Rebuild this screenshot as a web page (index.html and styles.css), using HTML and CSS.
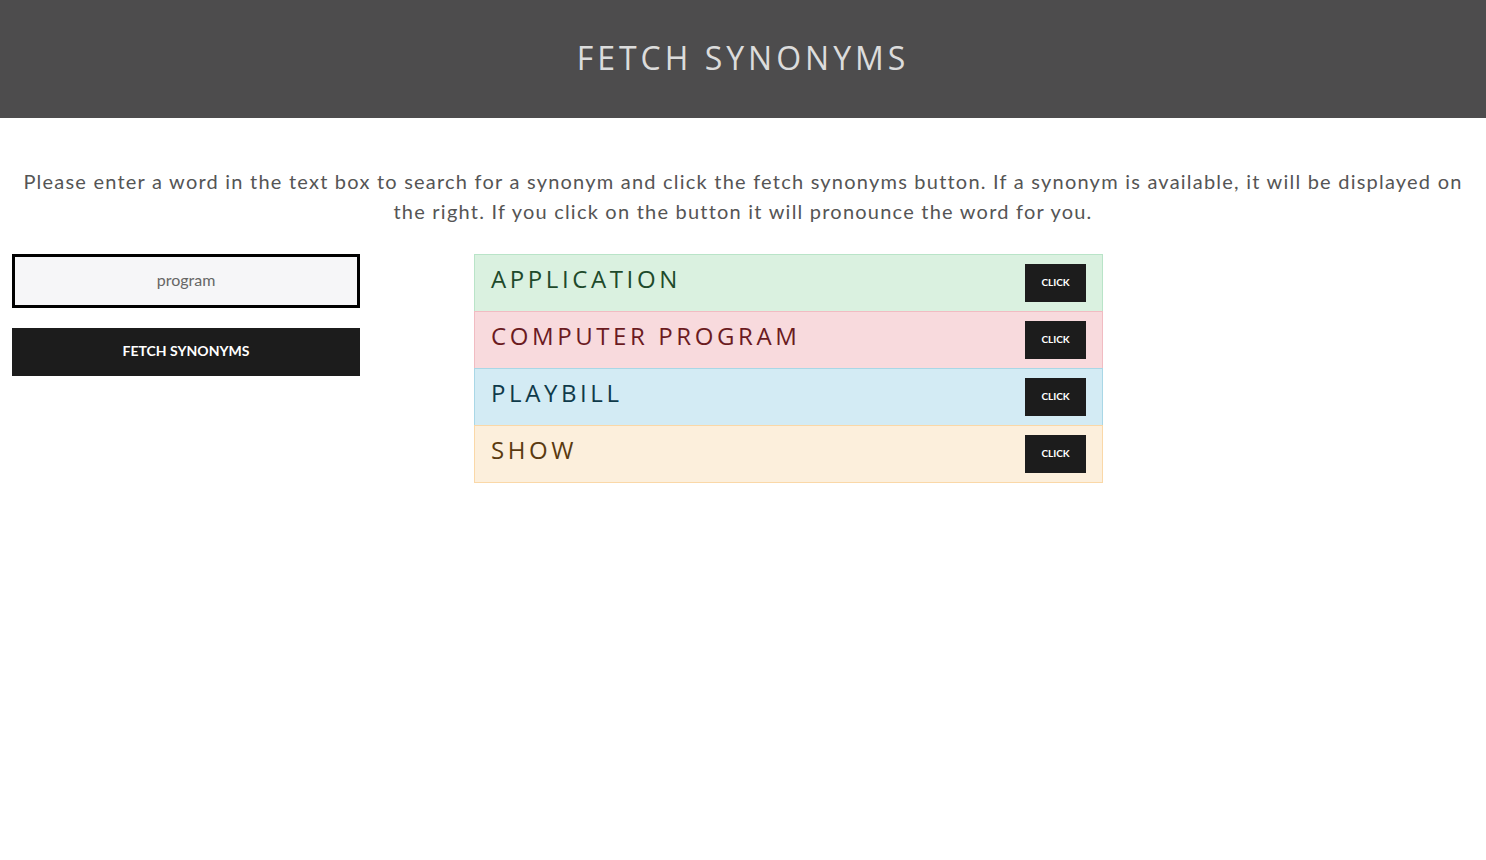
FILE: index.html
```html
<!DOCTYPE html>
<html lang="en">
<head>
<meta charset="utf-8">
<title>Fetch Synonyms</title>
<link rel="stylesheet" href="styles.css">
</head>
<body>
<header class="topbar">
  <h1 class="title">FETCH SYNONYMS</h1>
</header>
<main class="content">
  <p class="intro">Please enter a word in the text box to search for a synonym and click the fetch synonyms button. If a synonym is available, it will be displayed on the right. If you click on the button it will pronounce the word for you.</p>
  <div class="layout">
    <div class="controls">
      <input class="word-input" type="text" value="program">
      <button class="fetch-btn" type="button">FETCH SYNONYMS</button>
    </div>
    <ul class="results">
      <li class="result success"><span class="word">APPLICATION</span><button class="say-btn" type="button">CLICK</button></li>
      <li class="result danger"><span class="word">COMPUTER PROGRAM</span><button class="say-btn" type="button">CLICK</button></li>
      <li class="result info"><span class="word">PLAYBILL</span><button class="say-btn" type="button">CLICK</button></li>
      <li class="result warning"><span class="word">SHOW</span><button class="say-btn" type="button">CLICK</button></li>
    </ul>
  </div>
</main>
</body>
</html>
```
FILE: styles.css
```css
* { box-sizing: border-box; }
body {
  margin: 0;
  font-family: "Lato", "Open Sans", sans-serif;
  background: #fff;
}
.topbar {
  background: #4d4c4d;
  height: 118px;
  display: flex;
  align-items: center;
  justify-content: center;
  padding-bottom: 3px;
}
.title {
  margin: 0;
  font-family: "Open Sans", sans-serif;
  font-weight: 400;
  font-size: 32px;
  letter-spacing: 4px;
  color: #dcdcdc;
}
.content {
  padding: 48px 12px 0;
}
.intro {
  margin: 0 0 28px;
  text-align: center;
  font-size: 20px;
  line-height: 30px;
  letter-spacing: 1.22px;
  color: #555;
}
.layout {
  display: flex;
  align-items: flex-start;
}
.controls {
  width: 348px;
  display: flex;
  flex-direction: column;
  gap: 20px;
}
.word-input {
  height: 54px;
  border: 3px solid #000;
  background: #f6f6f8;
  text-align: center;
  font-family: "Lato", sans-serif;
  font-size: 16px;
  color: #666;
  outline: none;
  padding: 0 0 4px;
}
.fetch-btn {
  height: 48px;
  border: none;
  background: #1c1c1c;
  color: #fff;
  font-family: "Lato", sans-serif;
  font-weight: 700;
  font-size: 14px;
  padding: 0 0 4px;
}
.results {
  list-style: none;
  margin: 0 0 0 114px;
  padding: 0;
  width: 629px;
}
.result {
  height: 58px;
  display: flex;
  align-items: flex-start;
  justify-content: space-between;
  padding: 9px 16px 0 16px;
  border: 1px solid;
}
.result + .result { margin-top: -1px; }
.word {
  font-family: "Open Sans", sans-serif;
  font-size: 24px;
  letter-spacing: 3.6px;
  line-height: 30px;
}
.say-btn {
  width: 61px;
  height: 38px;
  border: none;
  background: #1c1c1c;
  color: #fff;
  font-family: "Lato", sans-serif;
  font-size: 10px;
  font-weight: 700;
  padding: 0 0 2px;
}
.success { background: #daf1e0; border-color: #b9e4c8; color: #1e4a2b; }
.danger { background: #f8dadd; border-color: #f1bcc2; color: #6b1b1f; }
.info { background: #d3ebf4; border-color: #a9d7e6; color: #0f3a4a; }
.warning { background: #fcefdc; border-color: #fad8a8; color: #5a3a10; }
```
